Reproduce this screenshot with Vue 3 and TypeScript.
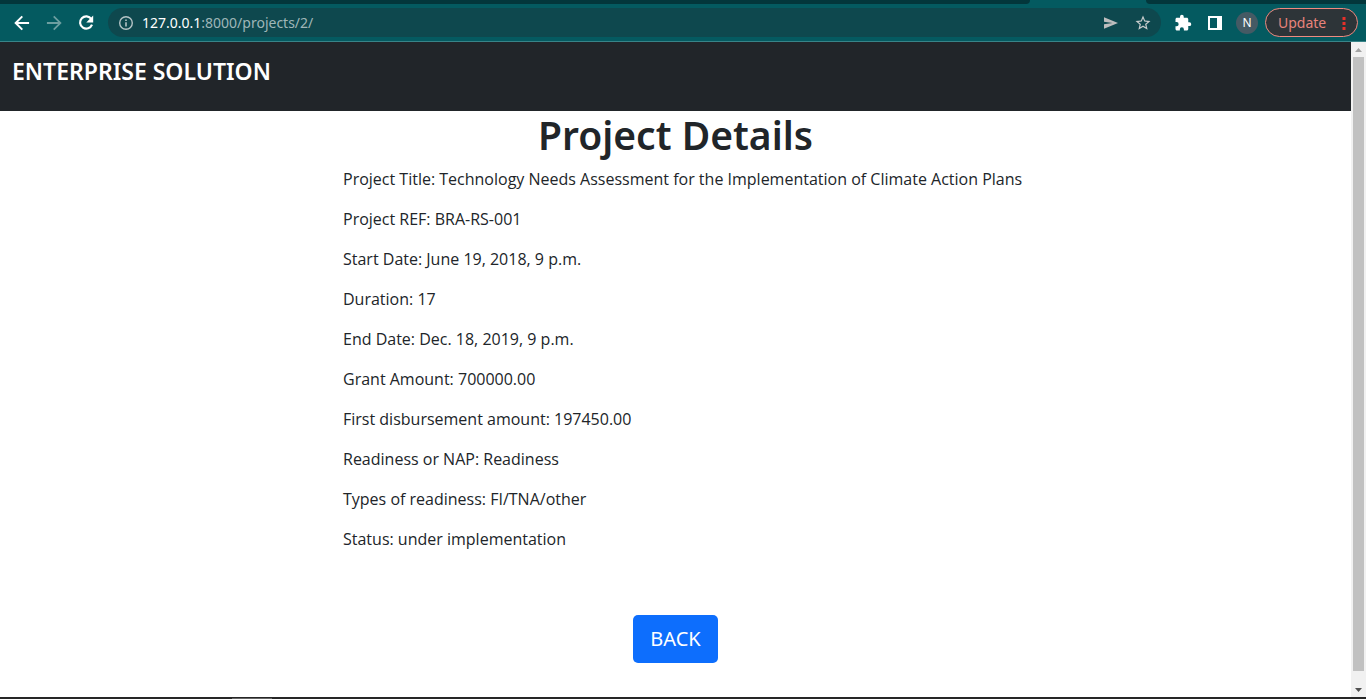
<script setup lang="ts">
interface Detail {
  label: string
  value: string
}

const details: Detail[] = [
  { label: 'Project Title', value: 'Technology Needs Assessment for the Implementation of Climate Action Plans' },
  { label: 'Project REF', value: 'BRA-RS-001' },
  { label: 'Start Date', value: 'June 19, 2018, 9 p.m.' },
  { label: 'Duration', value: '17' },
  { label: 'End Date', value: 'Dec. 18, 2019, 9 p.m.' },
  { label: 'Grant Amount', value: '700000.00' },
  { label: 'First disbursement amount', value: '197450.00' },
  { label: 'Readiness or NAP', value: 'Readiness' },
  { label: 'Types of readiness', value: 'FI/TNA/other' },
  { label: 'Status', value: 'under implementation' },
]
</script>

<template>
  <div class="window">
    <div class="tabs">
      <div class="tabs-left"></div>
      <div class="tabs-right"></div>
    </div>
    <div class="toolbar">
      <button class="icon" type="button" aria-label="Back">
        <svg viewBox="0 0 24 24" width="20" height="20"><path fill="#fff" d="M20.5 10.8H7.3l5.900-5.900L11.500 3.200 2.700 12l8.800 8.800 1.700-1.700-5.900-5.900h13.200z" /></svg>
      </button>
      <button class="icon" type="button" aria-label="Forward">
        <svg viewBox="0 0 24 24" width="20" height="20"><path fill="#6d9ea0" d="M3.5 10.900h13.400l-6-6 1.500-1.600 8.800 8.700-8.800 8.700-1.500-1.600 6-6H3.500z" /></svg>
      </button>
      <button class="icon" type="button" aria-label="Reload">
        <svg viewBox="0 0 24 24" width="20" height="20"><path fill="none" stroke="#fff" stroke-width="2.6" d="M18.400 7.200A7.400 7.400 0 1 0 19.200 14" /><path fill="#fff" d="M20.600 3v8.300h-8.300z" /></svg>
      </button>
      <div class="address">
        <svg class="info" viewBox="0 0 16 16" width="16" height="16"><circle cx="8" cy="8" r="6.3" fill="none" stroke="#b5c4c6" stroke-width="1.4" /><path fill="#b5c4c6" d="M7.200 4.400h1.600v1.700H7.200zM7.200 7.200h1.600v4.400H7.200z" /></svg>
        <span class="url"><b>127.0.0.1</b>:8000/projects/2/</span>
        <button class="icon small" type="button" aria-label="Send">
          <svg viewBox="0 0 16 16" width="16" height="16"><path fill="#bdbdbd" d="M1 2.200 15 8 1 13.800V9.300L9.500 8 1 6.700z" /></svg>
        </button>
        <button class="icon small" type="button" aria-label="Bookmark">
          <svg viewBox="0 0 24 24" width="18" height="18"><path fill="#c8cccc" d="M22 9.240l-7.190-.62L12 2 9.190 8.630 2 9.240l5.460 4.730L5.820 21 12 17.270 18.180 21l-1.630-7.030L22 9.240zM12 15.400l-3.760 2.270 1-4.280-3.320-2.880 4.380-.38L12 6.100l1.710 4.040 4.380.38-3.320 2.880 1 4.280L12 15.400z" /></svg>
        </button>
      </div>
      <button class="icon ext" type="button" aria-label="Extensions">
        <svg viewBox="0 0 24 24" width="18" height="18"><path fill="#fff" d="M20.500 11H19V7c0-1.100-.9-2-2-2h-4V3.500a2.500 2.500 0 0 0-5 0V5H4c-1.100 0-2 .9-2 2v3.800h1.500a2.700 2.700 0 0 1 0 5.400H2V20c0 1.100.9 2 2 2h3.800v-1.500a2.700 2.700 0 0 1 5.400 0V22H17c1.100 0 2-.9 2-2v-4h1.500a2.500 2.500 0 0 0 0-5z" /></svg>
      </button>
      <button class="icon panel" type="button" aria-label="Side panel">
        <svg viewBox="0 0 14 14" width="14" height="14"><path fill="#fff" fill-rule="evenodd" d="M0 0h14v14H0zM2 2v10h7V2z" /></svg>
      </button>
      <button class="avatar" type="button" aria-label="Profile N">N</button>
      <button class="update" type="button">
        Update
        <svg viewBox="0 0 4 14" width="4" height="14"><path fill="#e8302a" d="M.5 1h3v3h-3zM.5 6h3v3h-3zM.5 11h3v3h-3z" /></svg>
      </button>
    </div>
    <div class="view">
      <div class="page">
        <header class="navbar"><h4>ENTERPRISE SOLUTION</h4></header>
        <main>
          <h1>Project Details</h1>
          <div class="details">
            <p v-for="item in details" :key="item.label">{{ item.label }}: {{ item.value }}</p>
          </div>
          <a class="back" href="#">BACK</a>
        </main>
      </div>
      <div class="scrollbar" aria-hidden="true">
        <svg viewBox="0 0 15 15" width="15" height="15"><path fill="#a3a3a3" d="M4 10h7L7.500 6z" /></svg>
        <div class="thumb"></div>
        <svg class="down" viewBox="0 0 15 15" width="15" height="15"><path fill="#505050" d="M4 6h7l-3.500 4z" /></svg>
      </div>
    </div>
    <div class="dock"><div class="dock-item"></div></div>
  </div>
</template>

<style>
body {
  margin: 0;
}
</style>

<style scoped>
.window {
  display: flex;
  flex-direction: column;
  height: 100vh;
  overflow: hidden;
  background: #fff;
  color: #212529;
  font-family: "Noto Sans", "Open Sans", sans-serif;
}
.window * {
  box-sizing: border-box;
}
button {
  border: 0;
  padding: 0;
  background: none;
  font-family: inherit;
}
svg {
  display: block;
}
.tabs {
  display: flex;
  justify-content: space-between;
  flex: none;
  height: 4px;
  background: #045a60;
}
.tabs-left {
  flex: 1;
  margin-right: 116px;
  background: #03363b;
  border-bottom-right-radius: 4px;
}
.tabs-right {
  width: 220px;
  background: #03363b;
  border-bottom-left-radius: 4px;
}
.toolbar {
  display: flex;
  align-items: center;
  flex: none;
  height: 38px;
  padding: 0 8px 0 6px;
  background: #045a60;
  border-bottom: 1px solid #388488;
}
.icon {
  display: flex;
  align-items: center;
  justify-content: center;
  flex: none;
  width: 32px;
  height: 28px;
}
.address {
  display: flex;
  align-items: center;
  flex: 1;
  height: 29px;
  margin-left: 6px;
  padding: 0 2px 0 10px;
  border-radius: 15px;
  background: #0e484e;
}
.url {
  flex: 1;
  margin-left: 8px;
  color: #9fb6b8;
  font-size: 14px;
  line-height: 20px;
}
.url b {
  color: #fff;
  font-weight: 400;
}
.ext {
  margin-left: 6px;
}
.avatar {
  flex: none;
  width: 22px;
  height: 22px;
  margin: 0 7px 0 5px;
  border-radius: 50%;
  background: #455a64;
  color: #fff;
  font-size: 12px;
  line-height: 22px;
}
.update {
  display: flex;
  align-items: center;
  justify-content: space-between;
  flex: none;
  width: 93px;
  height: 29px;
  padding: 0 11px 0 12px;
  border: 1px solid #ee8a80;
  border-radius: 15px;
  background: #2d3438;
  color: #e8837b;
  font-size: 14px;
}
.view {
  display: flex;
  flex: 1;
  min-height: 0;
}
.page {
  flex: 1;
  min-width: 0;
}
.navbar {
  height: 69px;
  padding: 15px 12px;
  background: #212529;
}
h4 {
  margin: 0;
  color: #fff;
  font-size: 23px;
  font-weight: 600;
  line-height: 29px;
}
main {
  display: flex;
  flex-direction: column;
  align-items: center;
}
h1 {
  margin: 0 0 8px;
  font-size: 39px;
  font-weight: 600;
  line-height: 48px;
}
.details {
  width: 665px;
  max-width: 100%;
  margin-bottom: 48px;
  font-family: "Open Sans", "Noto Sans", sans-serif;
  font-size: 16px;
  line-height: 24px;
  white-space: nowrap;
}
p {
  margin: 0 0 16px;
}
.back {
  padding: 9px 17px;
  border-radius: 5px;
  background: #0d6efd;
  color: #fff;
  font-size: 20px;
  line-height: 30px;
  text-decoration: none;
}
.scrollbar {
  display: flex;
  flex-direction: column;
  flex: none;
  width: 15px;
  background: #f1f1f1;
}
.thumb {
  flex: 1;
  margin: 0 2px 11px;
  background: #c1c1c1;
}
.dock {
  flex: none;
  height: 2px;
  padding: 1px 0 0 232px;
  background: #262626;
}
.dock-item {
  width: 40px;
  height: 1px;
  background: #666;
}
</style>
